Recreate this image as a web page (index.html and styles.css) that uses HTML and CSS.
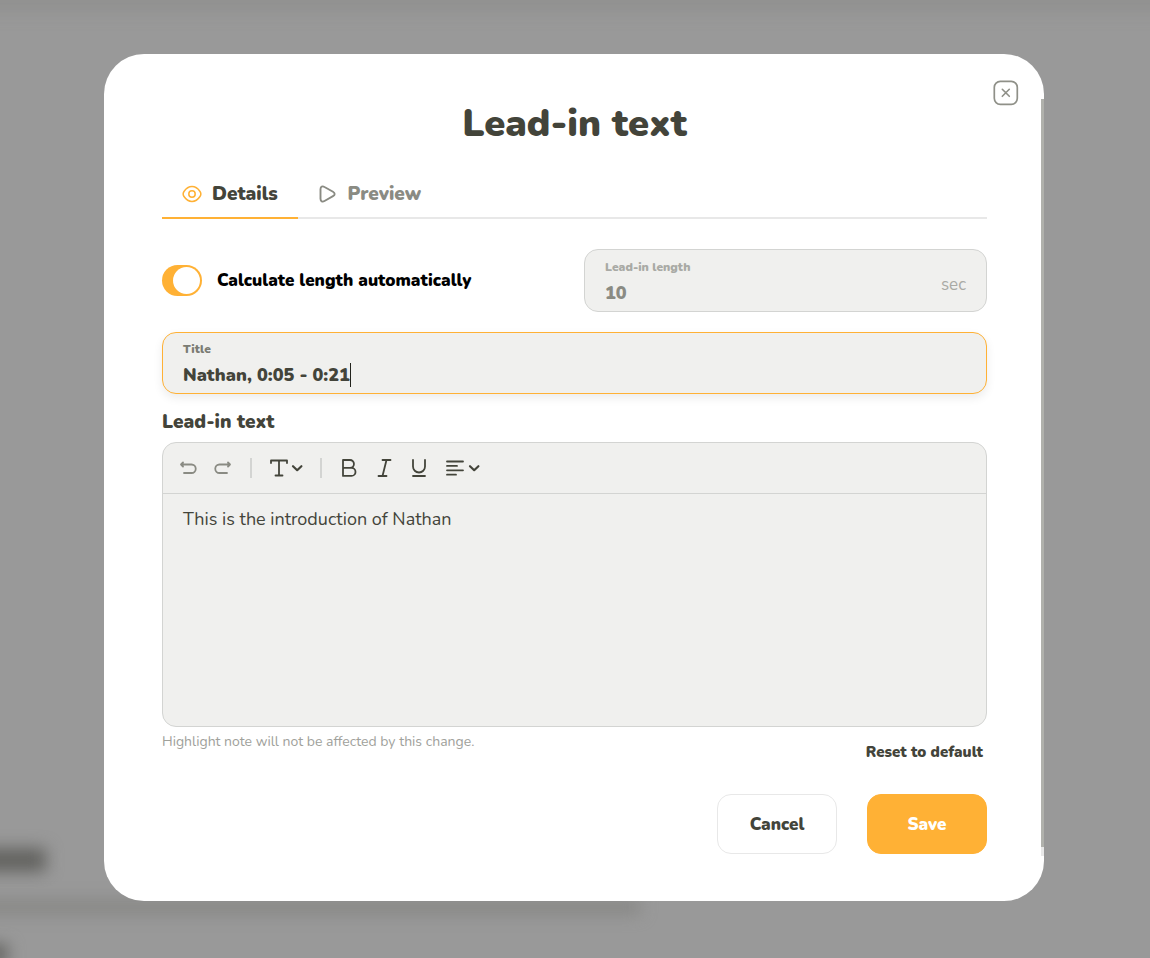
FILE: index.html
```html
<!DOCTYPE html>
<html lang="en">
<head>
  <meta charset="UTF-8" />
  <meta name="viewport" content="width=device-width, initial-scale=1" />
  <title>Lead-in text</title>
  <link rel="stylesheet" href="styles.css">
</head>
<body>

  <!-- blurred page behind the dialog -->
  <div class="page-behind" aria-hidden="true">
    <div class="blur blur-topbar"></div>
    <div class="blur blur-heading"></div>
    <div class="blur blur-line"></div>
    <div class="blur blur-corner"></div>
  </div>

  <div class="overlay">
    <form class="modal" role="dialog" aria-labelledby="modalTitle" onsubmit="return false">
      <button type="button" class="close" aria-label="Close">
        <svg width="26" height="26" viewBox="0 0 26 26" fill="none" stroke="#8f9088" stroke-linecap="round">
          <rect x="1.3" y="1.3" width="23" height="23" rx="6" stroke-width="1.7" />
          <path d="M9.300 9.300l7 7M16.300 9.300l-7 7" stroke-width="1.6" />
        </svg>
      </button>
      <div class="scrollbar"><div class="scrollbar-thumb"></div></div>

      <h1 id="modalTitle">Lead-in text</h1>

      <div class="tabs" role="tablist">
        <button type="button" class="tab active" role="tab" aria-selected="true">
          <svg width="20" height="20" viewBox="0 0 20 20" fill="none" stroke="currentColor" stroke-width="1.5">
            <path d="M10 2.6C13.6 2.6 16.3 5 18 7.5c1.1 1.600 1.100 3.400 0 5C16.300 15 13.600 17.400 10 17.400S3.700 15 2 12.500c-1.100-1.600-1.100-3.400 0-5C3.700 5 6.400 2.600 10 2.600z" />
            <circle cx="10" cy="10" r="3.2" />
          </svg>
          Details
        </button>
        <button type="button" class="tab" role="tab" aria-selected="false">
          <svg width="20" height="20" viewBox="0 0 20 20" fill="none" stroke="currentColor" stroke-width="1.9" stroke-linejoin="round">
            <path d="M2.500 5.200V14.800C2.500 17.500 4.500 18.200 6.500 17L15 12.200C17.200 10.900 17.200 9.100 15 7.800L6.500 3C4.500 1.800 2.500 2.500 2.500 5.200z" />
          </svg>
          Preview
        </button>
      </div>

      <div class="length-row">
        <label class="switch">
          <input type="checkbox" checked>
          Calculate length automatically
        </label>
        <div class="field disabled">
          <div class="field-main">
            <label for="leadLength">Lead-in length</label>
            <input id="leadLength" type="text" value="10" disabled>
          </div>
          <span class="unit">sec</span>
        </div>
      </div>

      <div class="field focused">
        <div class="field-main">
          <label for="titleInput">Title</label>
          <div class="input-line">
            <input id="titleInput" type="text" value="Nathan, 0:05 - 0:21">
            <span class="caret"></span>
          </div>
        </div>
      </div>

      <label class="section-label" for="leadText">Lead-in text</label>
      <div class="editor">
        <div class="toolbar">
          <button type="button" class="tool muted" aria-label="Undo">
            <svg width="20" height="20" viewBox="0 0 20 20">
              <path d="M3 6.500H13.500a4.200 4.200 0 0 1 0 8.500H6M5 4.500L3 6.500 5 8.500" />
            </svg>
          </button>
          <button type="button" class="tool muted" aria-label="Redo">
            <svg width="20" height="20" viewBox="0 0 20 20">
              <path d="M17 6.500H6.500a4.200 4.200 0 0 0 0 8.500h7.500M15 4.500L17 6.500 15 8.500" />
            </svg>
          </button>
          <span class="divider"></span>
          <button type="button" class="tool" aria-label="Text style">
            <svg width="34" height="20" viewBox="0 0 34 20">
              <path d="M2 5V2.500H18V5M10 2.500V17.500M6.500 17.500h7" />
              <path class="chevron" d="M24 8.200l4.200 4 4.200-4" />
            </svg>
          </button>
          <span class="divider"></span>
          <button type="button" class="tool" aria-label="Bold">
            <svg width="20" height="20" viewBox="0 0 20 20">
              <path d="M4 2H11a3.900 3.900 0 0 1 0 7.900H4zM4 9.900H12.500a4 4 0 0 1 0 8H4z" />
            </svg>
          </button>
          <button type="button" class="tool" aria-label="Italic">
            <svg width="20" height="20" viewBox="0 0 20 20">
              <path d="M8.500 2H16.500M4.500 18h8M12.500 2L8.500 18" />
            </svg>
          </button>
          <button type="button" class="tool" aria-label="Underline">
            <svg width="20" height="20" viewBox="0 0 20 20">
              <path d="M4 2V8.500a6 6 0 0 0 12 0V2M4 18H16" />
            </svg>
          </button>
          <button type="button" class="tool" aria-label="Align">
            <svg width="36" height="20" viewBox="0 0 36 20">
              <path d="M3 3.500h16M3 7.900h10M3 12.300h16M3 16.700h9" />
              <path class="chevron" d="M26 8.200l4.200 4 4.200-4" />
            </svg>
          </button>
        </div>
        <textarea id="leadText">This is the introduction of Nathan</textarea>
      </div>

      <div class="below-editor">
        <p class="note">Highlight note will not be affected by this change.</p>
        <button type="button" class="reset">Reset to default</button>
      </div>

      <div class="actions">
        <button type="button" class="btn">Cancel</button>
        <button type="submit" class="btn primary">Save</button>
      </div>
    </form>
  </div>

</body>
</html>
```
FILE: styles.css
```css
* {
  box-sizing: border-box;
}

body {
  margin: 0;
  min-height: 100vh;
  background-color: #999;
  font-family: Nunito, Lato, sans-serif;
  color: #43443a;
}

button, input, textarea {
  font-family: inherit;
  color: inherit;
}

button {
  padding: 0;
  border: 0;
  background: none;
  cursor: pointer;
}

svg {
  display: block;
}

.page-behind {
  position: fixed;
  inset: 0;
  overflow: hidden;
}

.blur {
  position: absolute;
  filter: blur(8px);
}

.blur-topbar {
  top: -20px;
  left: -20px;
  right: -20px;
  height: 32px;
  background: #919190;
}

.blur-heading {
  left: -20px;
  bottom: 86px;
  width: 66px;
  height: 24px;
  background: #636360;
}

.blur-line {
  left: -20px;
  bottom: 44px;
  width: 660px;
  height: 14px;
  background: #868684;
}

.blur-corner {
  left: -20px;
  bottom: -6px;
  width: 28px;
  height: 20px;
  background: #666663;
}

.overlay {
  position: relative;
  padding: 54px 106px 56px 104px;
}

.modal {
  position: relative;
  max-width: 940px;
  margin: 0 auto;
  padding: 43px 57px 47px 58px;
  border-radius: 40px;
  background: #fff;
}

.close {
  position: absolute;
  top: 26px;
  right: 25px;
}

.scrollbar {
  position: absolute;
  top: 45px;
  right: 0;
  bottom: 45px;
  width: 3px;
  padding-bottom: 9px;
  background: #e8e8e8;
}

.scrollbar-thumb {
  height: 100%;
  background: #b0b1ac;
}

h1 {
  margin: 0 0 24px;
  font-size: 38px;
  line-height: 54px;
  font-weight: 900;
  text-align: center;
}

.tabs {
  display: flex;
  border-bottom: 2px solid #e8e8e8;
}

.tab {
  display: flex;
  align-items: center;
  gap: 10px;
  height: 44px;
  margin-bottom: -2px;
  padding: 0 20px 4px;
  border-bottom: 2px solid transparent;
  font-size: 19px;
  font-weight: 900;
  color: #8a8b83;
}

.tab.active {
  border-color: #ffb135;
  color: #43443a;
}

.tab.active svg {
  color: #ffb135;
}

.length-row {
  display: grid;
  grid-template-columns: 1fr 403px;
  align-items: center;
  gap: 19px;
  margin: 30px 0 20px;
}

.switch {
  display: flex;
  align-items: center;
  gap: 15px;
  font-size: 17px;
  font-weight: 900;
  color: #000;
}

.switch input {
  appearance: none;
  flex: none;
  width: 40px;
  height: 31px;
  margin: 0;
  padding: 2px;
  border-radius: 16px;
  background: #ffb135;
}

.switch input::before {
  content: "";
  display: block;
  width: 27px;
  height: 27px;
  border-radius: 50%;
  background: #fff;
}

.switch input:checked::before {
  margin-left: auto;
}

.field {
  display: flex;
  align-items: center;
  height: 62px;
  padding: 2px 20px 0;
  border: 1px solid #d3d4d2;
  border-radius: 14px;
  background: #f0f0ee;
}

.field.disabled {
  height: 63px;
}

.field-main {
  flex: 1;
  min-width: 0;
}

.field label {
  display: block;
  font-size: 12px;
  line-height: 16px;
  font-weight: 900;
  color: #7b7c74;
}

.field input {
  display: block;
  height: 24px;
  margin: 6px 0 0;
  padding: 0;
  border: 0;
  outline: 0;
  background: none;
  font-size: 18px;
  font-weight: 900;
}

.field.disabled label,
.field.disabled .unit {
  color: #a9aaa5;
}

.field.disabled input {
  color: #8a8b83;
}

.unit {
  padding-top: 6px;
  font-size: 17px;
}

.field.focused {
  border-color: #ffb135;
  box-shadow: 0 4px 10px rgba(0, 0, 0, 0.08);
}

.input-line {
  display: flex;
  align-items: flex-end;
}

.focused input {
  field-sizing: content;
  caret-color: transparent;
}

.caret {
  width: 1px;
  height: 24px;
  background: #22231c;
}

.section-label {
  display: block;
  margin: 15px 0 7px;
  font-size: 19px;
  line-height: 26px;
  font-weight: 900;
}

.editor {
  border: 1px solid #d3d4d2;
  border-radius: 14px;
  background: #f0f0ee;
  overflow: hidden;
}

.toolbar {
  display: flex;
  align-items: center;
  gap: 15px;
  height: 51px;
  padding: 0 15px;
  border-bottom: 1px solid #d3d4d2;
}

.tool svg {
  fill: none;
  stroke: #43443a;
  stroke-width: 1.8;
  stroke-linecap: round;
  stroke-linejoin: round;
}

.tool .chevron {
  stroke-width: 2.2;
}

.tool.muted svg {
  stroke: #8a8b83;
}

.divider {
  width: 2px;
  height: 20px;
  margin: 0 2px;
  background: #d3d4d2;
}

.editor textarea {
  display: block;
  width: 100%;
  height: 232px;
  padding: 12px 20px;
  border: 0;
  outline: 0;
  background: none;
  font-size: 18px;
  line-height: 26px;
  resize: none;
}

.below-editor {
  display: flex;
  justify-content: space-between;
  align-items: flex-start;
  height: 67px;
  padding: 5px 4px 0 0;
}

.note {
  margin: 0;
  font-size: 14px;
  line-height: 20px;
  color: #a0a19b;
}

.reset {
  margin-top: 10px;
  font-size: 15px;
  line-height: 20px;
  font-weight: 900;
}

.actions {
  display: flex;
  justify-content: flex-end;
  gap: 30px;
}

.btn {
  width: 120px;
  height: 60px;
  border: 1px solid #e8e8e8;
  border-radius: 14px;
  font-size: 17px;
  font-weight: 900;
}

.btn.primary {
  border-color: #ffb135;
  background: #ffb135;
  color: #fff;
}
```
